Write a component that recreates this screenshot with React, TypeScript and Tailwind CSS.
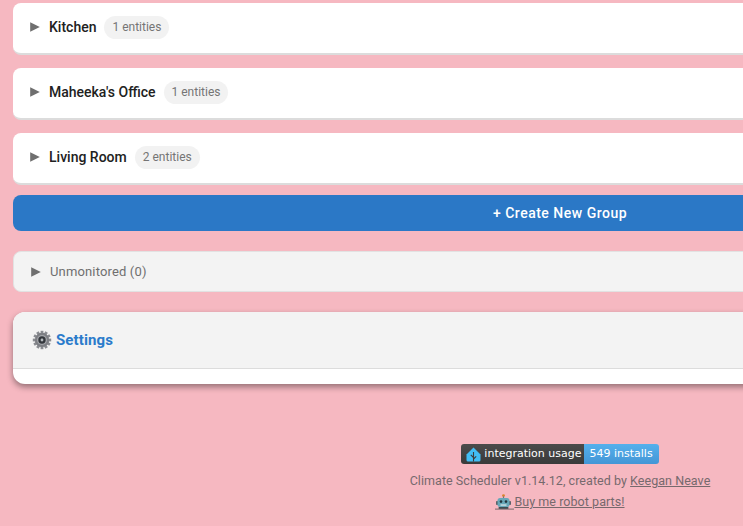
const font = { fontFamily: "Roboto, sans-serif" };

function Caret() {
  return (
    <svg width="10" height="10" viewBox="0 0 10 10" className="shrink-0">
      <path d="M0.2 0.2 L9.8 5 L0.2 9.8 Z" fill="#6f6f6f" />
    </svg>
  );
}

function Group({ name, count }: { name: string; count: string }) {
  return (
    <div className="h-[52px] flex items-center pl-[17px] bg-white rounded-lg border-b-2 border-[#dcdcdc] pb-[2px]">
      <Caret />
      <span className="ml-[9px] text-[14px] font-medium text-[#212121]">{name}</span>
      <span className="ml-[8px] h-[23px] flex items-center px-[8px] rounded-full bg-[#f2f2f2] text-[12px] text-[#757575]">
        {count}
      </span>
    </div>
  );
}

function Gear() {
  const teeth = Array.from({ length: 12 }, (_, i) => i * 30);
  return (
    <svg width="20" height="20" viewBox="0 0 20 20" className="shrink-0">
      {teeth.map((a) => (
        <rect key={a} x="8.6" y="0.8" width="2.8" height="4" fill="#8a8c91" transform={`rotate(${a} 10 10)`} />
      ))}
      <circle cx="10" cy="10" r="7.2" fill="#7d7f84" />
      <circle cx="10" cy="10" r="5" fill="#a4a6aa" />
      <circle cx="10" cy="10" r="3.7" fill="#33373c" />
      <circle cx="10" cy="10" r="1.4" fill="#b6babe" />
    </svg>
  );
}

function HomeLogo() {
  return (
    <svg width="15" height="15" viewBox="0 0 15 15" className="shrink-0">
      <path d="M7.5 0.5 L14.5 7.5 V13 Q14.5 14.5 13 14.5 H2 Q0.5 14.5 0.5 13 V7.5 Z" fill="#41bdf5" />
      <path d="M7.5 14.5 V5 M7.5 10.5 L4.8 7.8 M7.5 12 L10.2 9.3" stroke="#3d3d3d" strokeWidth="1.1" fill="none" />
    </svg>
  );
}

function Robot() {
  return (
    <svg width="19" height="16" viewBox="0 0 19 16" className="shrink-0">
      <g transform="translate(0.5 0)">
        <circle cx="8" cy="1.6" r="1.4" fill="#d9822b" />
        <rect x="7.4" y="2.4" width="1.2" height="2" fill="#6c7a80" />
        <rect x="0.6" y="7" width="2" height="4" rx="0.8" fill="#4b5a60" />
        <rect x="13.4" y="7" width="2" height="4" rx="0.8" fill="#4b5a60" />
        <rect x="2" y="4" width="12" height="9" rx="2.5" fill="#67a7b8" />
        <circle cx="5.5" cy="7.6" r="1.3" fill="#22343b" />
        <circle cx="10.5" cy="7.6" r="1.3" fill="#22343b" />
        <rect x="5" y="10.4" width="6" height="1.3" fill="#d7e4e8" />
        <rect x="3" y="13" width="10" height="2" rx="0.8" fill="#3f4c52" />
      </g>
      <rect x="0" y="14.6" width="19" height="1" fill="#76696d" />
    </svg>
  );
}

export default function App() {
  return (
    <div className="w-[743px] h-[526px] overflow-hidden bg-[#f6b8c1]" style={font}>
      <div className="w-[1094px] ml-[13px] pt-[3px] flex flex-col">
        <div className="flex flex-col gap-[13px]">
          <Group name="Kitchen" count="1 entities" />
          <Group name="Maheeka's Office" count="1 entities" />
          <Group name="Living Room" count="2 entities" />
        </div>

        <button className="mt-[10px] h-[36px] rounded-lg bg-[#2b78c6] text-white text-[14px] font-medium tracking-[0.5px]">
          + Create New Group
        </button>

        <div className="mt-[20px] h-[41px] flex items-center pl-[17px] bg-[#f3f3f3] rounded-lg border border-[#e2e2e2]">
          <Caret />
          <span className="ml-[9px] text-[13px] tracking-[0.15px] text-[#6f6f6f]">Unmonitored (0)</span>
        </div>

        <div className="mt-[20px] h-[72px] rounded-xl bg-white overflow-hidden shadow-[0_3px_6px_rgba(0,0,0,0.4)]">
          <div className="h-[57px] flex items-center pl-[19px] gap-[4px] bg-[#f3f3f3] border-b border-[#dcdcdc]">
            <Gear />
            <span className="text-[15px] font-bold tracking-[0.1px] text-[#2a7bcb]">Settings</span>
          </div>
        </div>

        <div className="mt-[60px] flex flex-col items-center">
          <div className="h-[20px] flex rounded-[3px] overflow-hidden text-[11px] text-white" style={{ fontFamily: "'DejaVu Sans', sans-serif" }}>
            <span className="flex items-center gap-[3px] pl-[5px] pr-[3px] bg-gradient-to-b from-[#4b4b4b] to-[#3a3a3a]">
              <HomeLogo />
              integration usage
            </span>
            <span className="flex items-center pl-[5px] pr-[6px] bg-gradient-to-b from-[#55b0ec] to-[#4396d6]">549 installs</span>
          </div>
          <p className="mt-[8px] text-[12.5px] leading-[18px] tracking-[0.05px] text-[#76696d]">
            Climate Scheduler v1.14.12, created by <a className="underline">Keegan Neave</a>
          </p>
          <a className="mt-[3px] flex items-center text-[12.5px] leading-[18px] tracking-[0.05px] text-[#76696d] underline">
            <Robot />
            Buy me robot parts!
          </a>
        </div>
      </div>
    </div>
  );
}
